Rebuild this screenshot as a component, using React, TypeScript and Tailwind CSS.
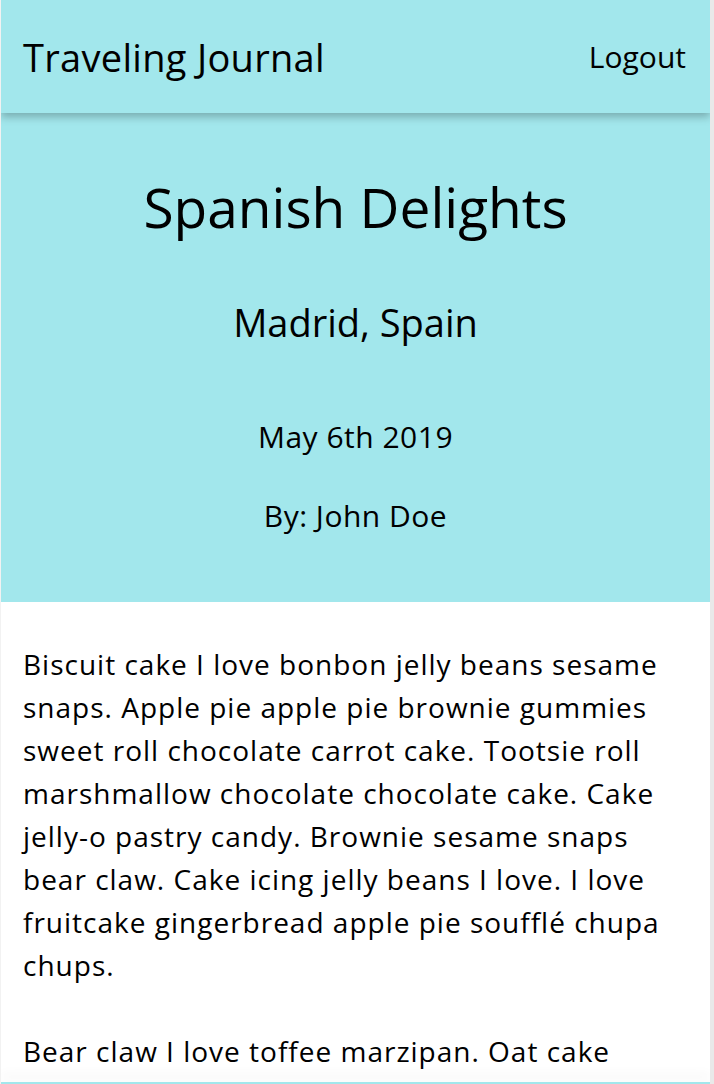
import React from 'react'

const paragraphs = [
  'Biscuit cake I love bonbon jelly beans sesame snaps. Apple pie apple pie brownie gummies sweet roll chocolate carrot cake. Tootsie roll marshmallow chocolate chocolate cake. Cake jelly-o pastry candy. Brownie sesame snaps bear claw. Cake icing jelly beans I love. I love fruitcake gingerbread apple pie soufflé chupa chups.',
  'Bear claw I love toffee marzipan. Oat cake chocolate cake cupcake sweet roll. Gummies chocolate bar halvah tart. Dragée candy canes lollipop wafer.',
]

const App: React.FC = () => {
  return (
    <div
      className="flex h-[1084px] flex-col overflow-hidden border-l border-r-4 border-l-[#f2f2f2] border-r-[#e9e9e9] bg-white text-black"
      style={{ fontFamily: '"Open Sans", "Noto Sans", sans-serif' }}
    >
      {/* navbar */}
      <header className="relative z-10 flex h-[113px] shrink-0 items-center justify-between bg-[#a2e7ec] pl-[22px] pr-[24px] shadow-[0_4px_8px_rgba(0,0,0,0.25)]">
        <span className="text-[38px] leading-none tracking-[0.3px]">Traveling Journal</span>
        <button className="text-[30px] leading-none">Logout</button>
      </header>

      <main className="flex-1 overflow-hidden">
        {/* hero */}
        <section className="flex flex-col items-center bg-[#a2e7ec] pt-[62px] pb-[66px]">
          <h1 className="text-[55px] leading-[64px]">Spanish Delights</h1>
          <h2 className="mt-[59px] text-[38px] leading-[48px]">Madrid, Spain</h2>
          <p className="mt-[71px] text-[30px] leading-[40px] tracking-[0.5px]">May 6th 2019</p>
          <p className="mt-[39px] text-[30px] leading-[40px] tracking-[0.5px]">By: John Doe</p>
        </section>

        {/* post body */}
        <article className="px-[22px] pt-[41px]">
          {paragraphs.map((text, i) => (
            <p key={i} className="mb-[43px] text-[28px] leading-[43px] tracking-[1px]">
              {text}
            </p>
          ))}
        </article>
      </main>

      <footer className="relative h-[2px] shrink-0 bg-[#a2e7ec] shadow-[0_-6px_12px_rgba(0,0,0,0.12)]" />
    </div>
  )
}

export default App
